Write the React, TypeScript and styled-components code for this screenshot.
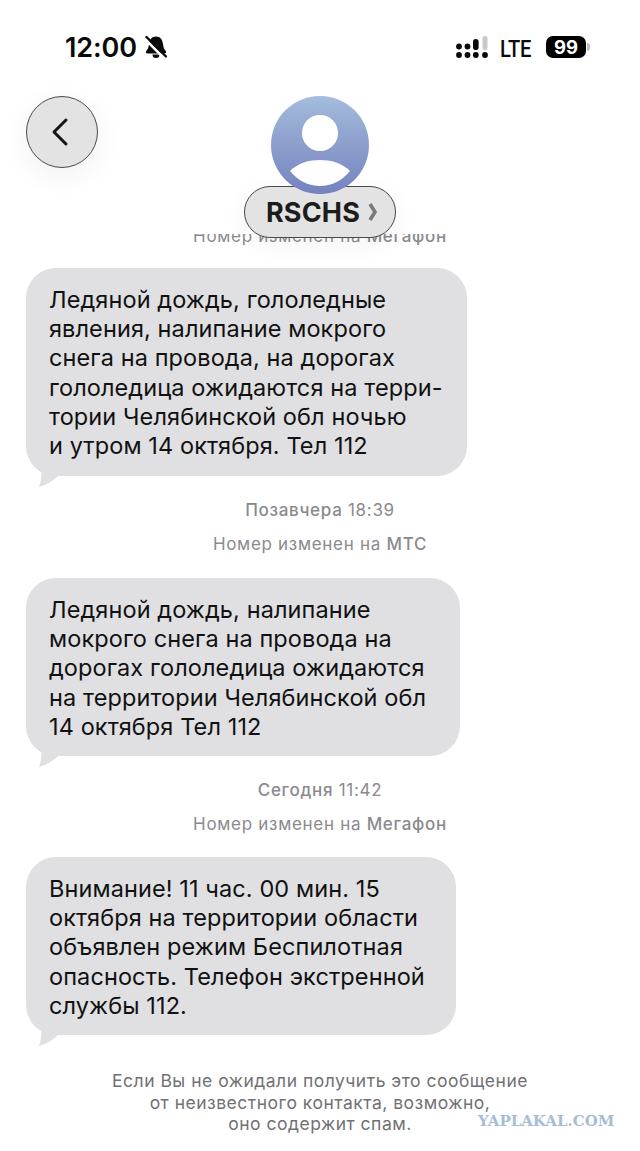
import React from 'react';
import styled, { createGlobalStyle } from 'styled-components';

const GlobalStyle = createGlobalStyle`
  html, body {
    margin: 0;
    padding: 0;
    background: #fff;
  }
  body {
    font-family: Inter, "Noto Sans", sans-serif;
  }
`;

const Screen = styled.div`
  position: relative;
  width: 640px;
  height: 1151px;
  overflow: hidden;
  background: #fff;
`;

const Header = styled.header`
  position: relative;
  z-index: 1;
  height: 234px;
  box-sizing: border-box;
  background: #fff;
`;

const StatusBar = styled.div`
  display: flex;
  align-items: center;
  justify-content: space-between;
  height: 96px;
  box-sizing: border-box;
  padding: 0 50px 2px 65px;
`;

const TimeGroup = styled.div`
  display: flex;
  align-items: center;
  gap: 8px;
  color: #0a0a0a;
`;

const Time = styled.span`
  font-size: 27px;
  font-weight: 600;
  letter-spacing: -0.1px;
`;

const StatusIcons = styled.div`
  display: flex;
  align-items: center;
  gap: 11px;
`;

const Lte = styled.span`
  display: inline-block;
  width: 32px;
  margin: 0 3px 0 1px;
  padding-top: 3px;
  font-family: Roboto, sans-serif;
  font-size: 24px;
  font-weight: 500;
  letter-spacing: -0.5px;
  color: #0a0a0a;
  white-space: nowrap;
  transform: scaleX(0.84);
  transform-origin: left center;
`;

const Battery = styled.div`
  display: flex;
  align-items: center;
  gap: 1px;
`;

const BatteryBody = styled.div`
  display: flex;
  align-items: center;
  justify-content: center;
  width: 40px;
  height: 22px;
  border-radius: 7px;
  background: #000;
  color: #fff;
  font-size: 18.5px;
  font-weight: 700;
`;

const BatteryNub = styled.div`
  width: 3px;
  height: 8px;
  border-radius: 0 3px 3px 0;
  background: #bdbdbd;
`;

const NavRow = styled.div`
  position: relative;
  display: flex;
  flex-direction: column;
  align-items: center;
`;

const BackButton = styled.button`
  position: absolute;
  left: 26px;
  top: 0;
  display: flex;
  align-items: center;
  justify-content: center;
  width: 72px;
  height: 72px;
  padding: 0 4px 0 0;
  box-sizing: border-box;
  border: 1px solid #4a4a4a;
  border-radius: 50%;
  background: #e3e3e3;
  color: #161616;
  box-shadow: 0 8px 30px rgba(0, 0, 0, 0.06);
`;

const Avatar = styled.div`
  position: relative;
  width: 98px;
  height: 98px;
  border-radius: 50%;
  overflow: hidden;
  z-index: 1;
  background: linear-gradient(180deg, #a4bcdc 0%, #7482bf 100%);
`;

const ContactPill = styled.div`
  display: flex;
  align-items: center;
  justify-content: center;
  gap: 8px;
  width: 152px;
  height: 52px;
  margin-top: -8px;
  padding-left: 4px;
  box-sizing: border-box;
  border: 1px solid #4a4a4a;
  border-radius: 26px;
  background: #e3e3e3;
  box-shadow: 0 6px 24px rgba(0, 0, 0, 0.05);
`;

const ContactName = styled.span`
  font-size: 27px;
  font-weight: 700;
  letter-spacing: 0.2px;
  color: #1c1c1c;
`;

const Thread = styled.main`
  display: flex;
  flex-direction: column;
  align-items: flex-start;
  padding: 0 0 0 26px;
`;

const Notice = styled.div<{ $top: number }>`
  align-self: stretch;
  margin: ${(p) => p.$top}px 0 0 -26px;
  height: 20px;
  line-height: 20px;
  font-size: 17px;
  letter-spacing: 0.7px;
  font-weight: 400;
  color: #8a8a8e;
  text-align: center;
  white-space: nowrap;

  b {
    font-weight: 500;
  }
`;

const Bubble = styled.div<{ $width: number; $height: number; $top: number }>`
  position: relative;
  width: ${(p) => p.$width}px;
  height: ${(p) => p.$height}px;
  margin-top: ${(p) => p.$top}px;
  box-sizing: border-box;
  padding: 17px 0 0 23px;
  border-radius: 30px;
  background: #e0e0e3;
  color: #111;
  font-size: 23.5px;
  letter-spacing: 0.1px;
  line-height: 29.2px;
  white-space: pre-line;

  svg {
    position: absolute;
    left: 10px;
    bottom: -12px;
  }
`;

const SpamNote = styled.div`
  display: flex;
  flex-direction: column;
  align-items: center;
  align-self: stretch;
  margin: 35px 0 0 -26px;
  font-size: 17.5px;
  line-height: 21.5px;
  letter-spacing: 0.5px;
  color: #717175;
  white-space: nowrap;
`;

const Watermark = styled.div`
  position: absolute;
  left: 478px;
  top: 1112px;
  font-family: "DejaVu Serif", serif;
  font-size: 15px;
  font-weight: 700;
  color: #a5bed6;
  white-space: nowrap;
`;

const SignalIcon = () => (
  <svg width="32" height="22" viewBox="0 0 32 22">
    <rect x="26.5" y="0" width="5" height="14" rx="2.5" fill="#c9c9c9" />
    <g fill="#0a0a0a">
      <circle cx="3" cy="10.5" r="2.9" />
      <circle cx="3" cy="19" r="2.9" />
      <circle cx="11.5" cy="10.5" r="2.9" />
      <circle cx="11.5" cy="19" r="2.9" />
      <rect x="17" y="3" width="5.6" height="11" rx="2.8" />
      <circle cx="19.8" cy="19" r="2.9" />
      <circle cx="29" cy="19" r="2.9" />
    </g>
  </svg>
);

const MutedBell = () => (
  <svg width="22" height="22" viewBox="0 0 22 22">
    <path
      d="M11 0.5 C 6.5 0.5 4.5 4 4 8 C 3.7 11 3 13 1.2 15 C 0.5 16.2 1 17.5 2.6 17.5 H19.4 C 21 17.5 21.5 16.2 20.8 15 C 19 13 18.3 11 18 8 C 17.5 4 15.5 0.5 11 0.5 Z"
      fill="#0a0a0a"
    />
    <path d="M7.5 18.5 a3.5 3.5 0 0 0 7 0 Z" fill="#0a0a0a" />
    <path d="M0 3.2 L19 22" stroke="#fff" strokeWidth="2.6" />
    <path d="M1.5 1 L21 20.5" stroke="#0a0a0a" strokeWidth="2.4" strokeLinecap="round" />
  </svg>
);

const PersonIcon = () => (
  <svg width="98" height="98" viewBox="0 0 98 98">
    <circle cx="49" cy="37" r="18" fill="#fff" />
    <path d="M19 75 C 27 67, 38 64, 49 64 C 60 64, 71 67, 79 75 C 71 85, 60 90, 49 90 C 38 90, 27 85, 19 75 Z" fill="#fff" />
  </svg>
);

const BubbleTail = () => (
  <svg width="24" height="24" viewBox="0 0 24 24">
    <path d="M4 0 C 6 6, 6 15, 3 23 C 10 21, 17 17, 22 12 L 24 0 Z" fill="#e0e0e3" />
  </svg>
);

export default function App() {
  return (
    <>
      <GlobalStyle />
      <Screen>
        <Header>
          <StatusBar>
            <TimeGroup>
              <Time>12:00</Time>
              <MutedBell />
            </TimeGroup>
            <StatusIcons>
              <SignalIcon />
              <Lte>LTE</Lte>
              <Battery>
                <BatteryBody>99</BatteryBody>
                <BatteryNub />
              </Battery>
            </StatusIcons>
          </StatusBar>
          <NavRow>
            <BackButton aria-label="Назад">
              <svg width="20" height="30" viewBox="0 0 20 30" fill="none">
                <path d="M16 3 L4 15 L16 27" stroke="currentColor" strokeWidth="3" strokeLinecap="round" strokeLinejoin="round" />
              </svg>
            </BackButton>
            <Avatar>
              <PersonIcon />
            </Avatar>
            <ContactPill>
              <ContactName>RSCHS</ContactName>
              <svg width="10" height="20" viewBox="0 0 10 20" fill="none">
                <path d="M2 2 L7 10 L2 18" stroke="#7a7a7a" strokeWidth="3.6" />
              </svg>
            </ContactPill>
          </NavRow>
        </Header>
        <Thread>
          <Notice $top={-8}>
            Номер изменен на <b>Мегафон</b>
          </Notice>
          <Bubble $width={441} $height={208} $top={22}>
            {`Ледяной дождь, гололедные
явления, налипание мокрого
снега на провода, на дорогах
гололедица ожидаются на терри-
тории Челябинской обл ночью
и утром 14 октября. Тел 112`}
            <BubbleTail />
          </Bubble>
          <Notice $top={24}>
            <b>Позавчера</b> 18:39
          </Notice>
          <Notice $top={14}>
            Номер изменен на <b>МТС</b>
          </Notice>
          <Bubble $width={434} $height={178} $top={24}>
            {`Ледяной дождь, налипание
мокрого снега на провода на
дорогах гололедица ожидаются
на территории Челябинской обл
14 октября Тел 112`}
            <BubbleTail />
          </Bubble>
          <Notice $top={24}>
            <b>Сегодня</b> 11:42
          </Notice>
          <Notice $top={14}>
            Номер изменен на <b>Мегафон</b>
          </Notice>
          <Bubble $width={430} $height={178} $top={23}>
            {`Внимание! 11 час. 00 мин. 15
октября на территории области
объявлен режим Беспилотная
опасность. Телефон экстренной
службы 112.`}
            <BubbleTail />
          </Bubble>
          <SpamNote>
            <span>Если Вы не ожидали получить это сообщение</span>
            <span>от неизвестного контакта, возможно,</span>
            <span>оно содержит спам.</span>
          </SpamNote>
        </Thread>
        <Watermark>YAPLAKAL.COM</Watermark>
      </Screen>
    </>
  );
}
